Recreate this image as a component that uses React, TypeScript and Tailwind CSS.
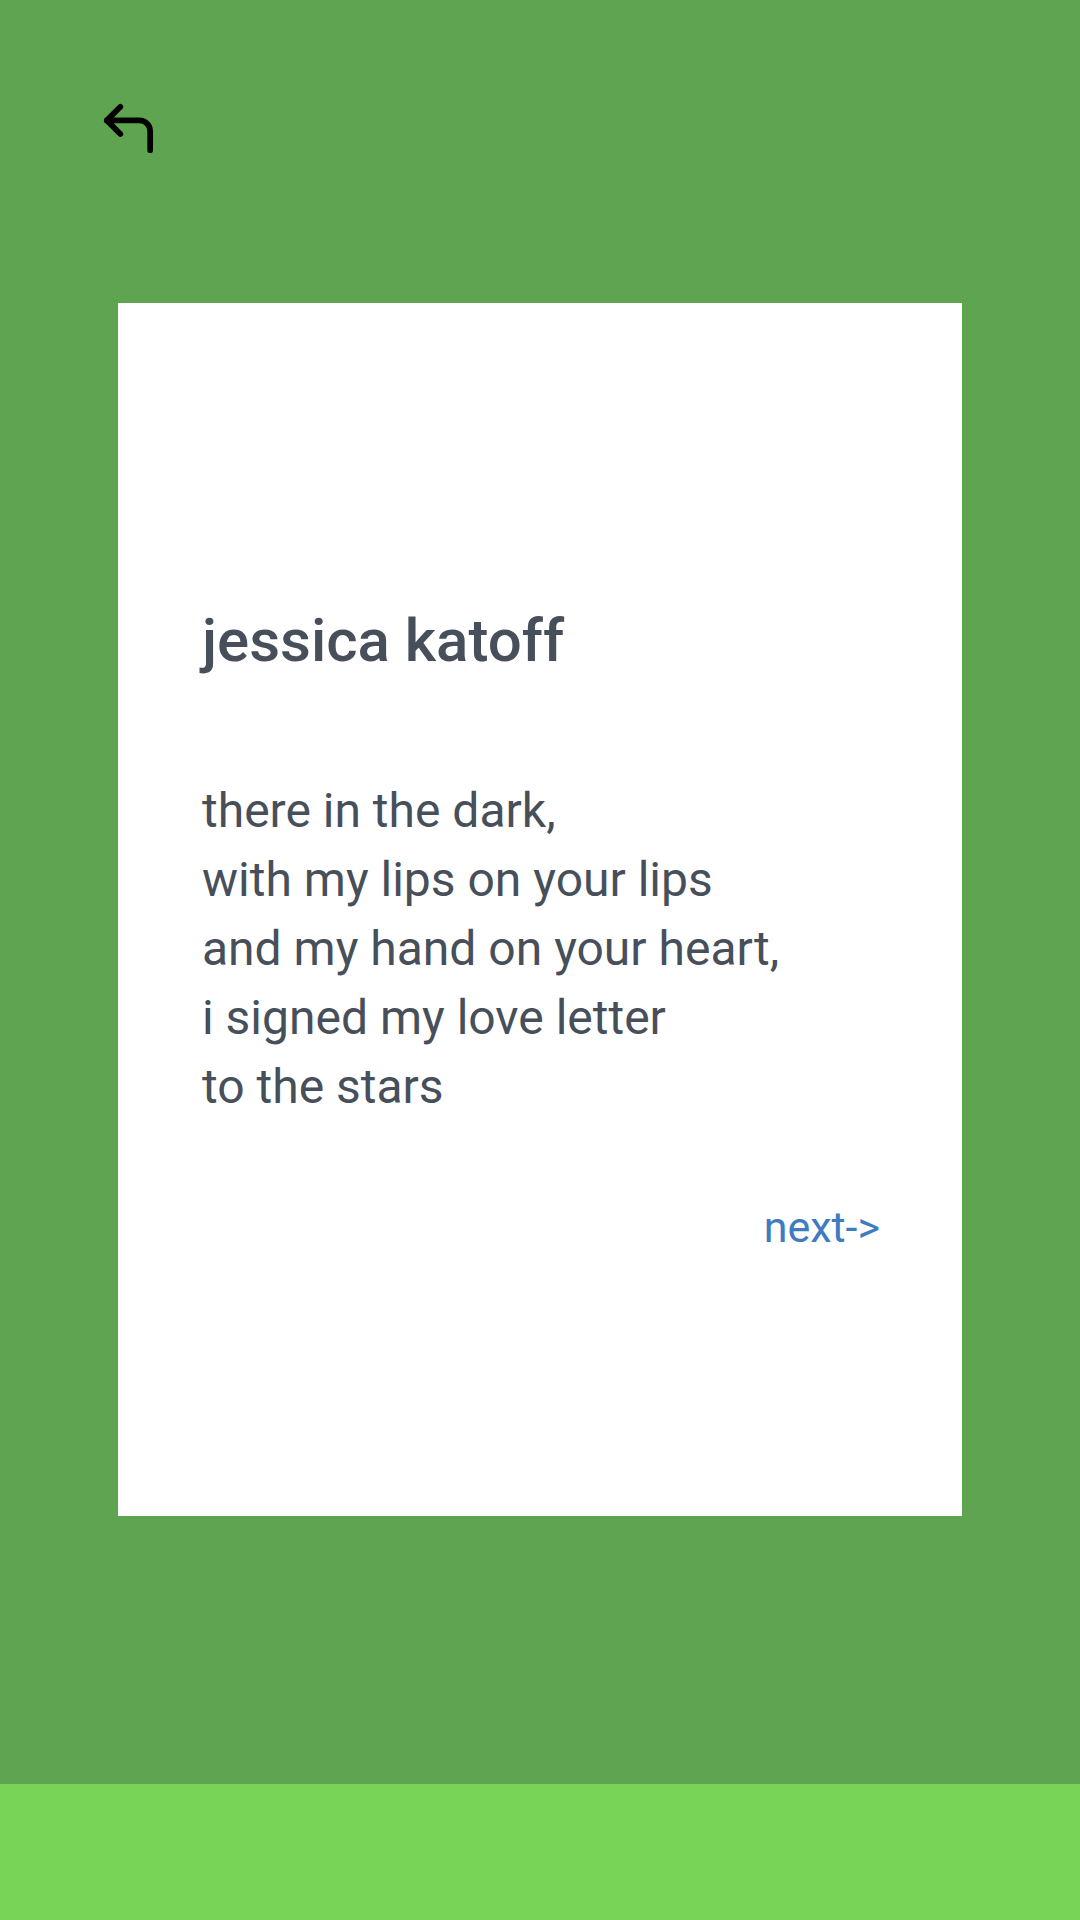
import { CornerUpLeft } from "lucide-react";

const lines = [
  "there in the dark,",
  "with my lips on your lips",
  "and my hand on your heart,",
  "i signed my love letter",
  "to the stars",
];

export default function App() {
  return (
    <div className="flex h-[1920px] w-[1080px] flex-col bg-[#5fa450] font-['Roboto',sans-serif]">
      <div className="flex-1">
        <div className="pl-[96px] pt-[96px]">
          <CornerUpLeft size={65} strokeWidth={2.1} color="#000" />
        </div>

        <div className="mx-[118px] mt-[142px] flex h-[1213px] flex-col bg-white pl-[84px] pr-[82px] pt-[308px]">
          <h1 className="text-[60px] leading-[60px] font-medium text-[#474f5a]">jessica katoff</h1>

          <div className="mt-[105px] flex flex-col">
            {lines.map((l) => (
              <p key={l} className="text-[48px] leading-[69px] text-[#474f5a]">
                {l}
              </p>
            ))}
          </div>

          <div className="mt-[84px] flex justify-end">
            <a className="text-[43px] leading-[44px] text-[#3e7bc1]">next-&gt;</a>
          </div>
        </div>
      </div>

      <div className="h-[136px] bg-[#78d456]" />
    </div>
  );
}
